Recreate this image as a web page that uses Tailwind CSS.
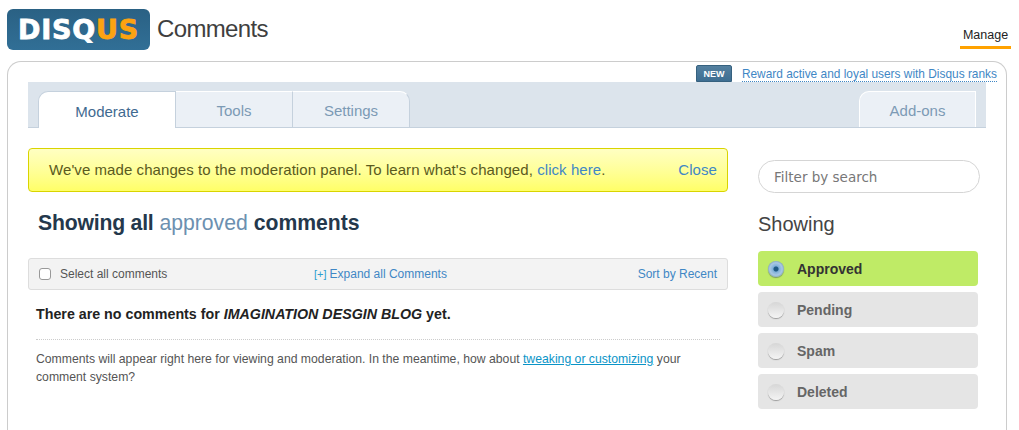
<!DOCTYPE html>
<html lang="en">

<head>
    <meta charset="UTF-8">
    <title>Disqus Comments</title>
    <script src="https://cdn.jsdelivr.net/npm/@tailwindcss/browser@4"></script>
</head>

<body class="bg-white h-[430px] overflow-hidden font-['Liberation_Sans',Arial,sans-serif] text-[#333]">
    <!-- header -->
    <header class="h-[61px] flex items-start pl-[7px] pr-2">
        <div class="mt-[9px] w-[143px] h-[41px] rounded-md bg-gradient-to-b from-[#2a6184] to-[#316f96] flex items-center justify-center font-['DejaVu_Sans',sans-serif] font-bold text-[27px] tracking-[0.8px] leading-none text-white [-webkit-text-stroke:0.8px_currentColor]">
            <span>DISQ<span class="text-[#fca311]">US</span></span>
        </div>
        <h1 class="ml-[7px] mt-[14px] text-[24px] leading-[30px] tracking-[-0.65px] text-[#3f3f3f]">Comments</h1>
        <nav class="ml-auto mt-[27px] w-[51px] h-[22px] border-b-[3px] border-[#ffa200] text-center text-[12.5px] leading-[16px] text-[#222]">Manage</nav>
    </header>

    <!-- panel -->
    <main class="mx-[7px] w-[1000px] h-[369px] border border-b-0 border-[#ccc] rounded-t-[14px] pl-5 pr-5">
        <div class="h-5 flex items-start justify-end -mr-[11px] pt-[3px]">
            <span class="w-9 h-[17px] rounded-t-[2px] bg-gradient-to-b from-[#54809f] to-[#3e6e92] border border-[#36617f] text-white text-[9px] font-bold leading-[16px] text-center">NEW</span>
            <a href="#" class="ml-[10px] mt-[2px] text-[11.9px] leading-[14px] h-[15px] text-[#3f87c5] border-b border-dotted border-[#3f87c5]">Reward active and loyal users with Disqus ranks</a>
        </div>

        <!-- tabs -->
        <div class="w-[958px] h-[46px] bg-[#dce4ec] border-b border-[#c5d1dd] pl-[10px] pr-[10px] pt-[9px] flex items-end text-[15px] leading-[18px] text-center text-[#7c9ab5]">
            <a href="#" class="w-[138px] h-[37px] -mb-px bg-white border-t border-l border-r border-[#c5d1dd] rounded-tl-[10px] font-medium text-[#3f6a90] pt-[11px]">Moderate</a>
            <a href="#" class="w-[117px] h-[36px] bg-[#ebf0f6] border-r border-t border-[#c5d1dd] border-t-white pt-[10px]">Tools</a>
            <a href="#" class="w-[117px] h-[36px] bg-[#ebf0f6] border-r border-t border-[#c5d1dd] border-t-white rounded-tr-[10px] pt-[10px]">Settings</a>
            <a href="#" class="ml-auto w-[117px] h-[36px] bg-[#ebf0f6] border-l border-r border-t border-white rounded-tl-[10px] pt-[10px]">Add-ons</a>
        </div>

        <div class="flex">
            <!-- main column -->
            <section class="w-[700px]">
                <div class="mt-5 h-[44px] rounded-[4px] border border-[#d9d400] bg-gradient-to-b from-[#ffffc2] to-[#ffff66] flex items-center justify-between pl-5 pr-[10px] text-[15px] tracking-[0.075px] text-[#5a5a20]">
                    <p>We've made changes to the moderation panel. To learn what's changed, <a href="#" class="text-[#3f87c5]">click here</a>.</p>
                    <a href="#" class="text-[#3f87c5]">Close</a>
                </div>

                <h2 class="mt-[16px] ml-[10px] h-[30px] text-[21.2px] leading-[29px] font-bold text-[#24384c]"><span class="tracking-[-0.2px]">Showing all</span> <span class="font-normal text-[#6c90b0]">approved</span> comments</h2>

                <div class="mt-[20px] h-[32px] rounded-[3px] border border-[#ddd] bg-[#f3f3f3] flex items-center pl-[10px] pr-[10px] text-[12px]">
                    <label class="w-[275px] flex items-center text-[#555]">
                        <span class="w-3 h-3 rounded-[3px] border border-[#999] bg-white mr-[9px]"></span>
                        Select all comments
                    </label>
                    <a href="#" class="text-[#3f87c5]"><span class="text-[11px] mr-[3px] text-[#2a9fd0]">[+]</span>Expand all Comments</a>
                    <a href="#" class="ml-auto text-[#3f87c5]">Sort by Recent</a>
                </div>

                <div class="ml-2 mr-2">
                    <p class="mt-[15px] pb-[16px] text-[14.25px] leading-[18px] font-bold text-[#222] border-b border-dotted border-[#ccc]">There are no comments for <em>IMAGINATION DESGIN BLOG</em> yet.</p>
                    <p class="mt-[10px] text-[12.23px] leading-[18px] text-[#555]">Comments will appear right here for viewing and moderation. In the meantime, how about <a href="#" class="text-[#0a94c7] underline">tweaking or customizing</a> your comment system?</p>
                </div>
            </section>

            <!-- sidebar -->
            <aside class="ml-[30px] w-[222px]">
                <input type="text" placeholder="Filter by search" class="mt-8 w-[222px] h-[33px] rounded-full border border-[#d5d5d5] pl-[15px] font-['DejaVu_Sans',sans-serif] text-[13.5px] placeholder:text-[#777] outline-none">
                <h3 class="mt-[17px] text-[20px] leading-[28px] text-[#444]">Showing</h3>
                <ul class="mt-[13px] w-[220px] flex flex-col gap-[6px] text-[14px] font-bold text-[#666]">
                    <li class="h-[35px] pt-px rounded-[4px] bg-[#bfeb66] flex items-center pl-[10px] text-[#333]">
                        <span class="w-4 h-4 -mt-px rounded-full bg-[radial-gradient(circle_at_50%_50%,#1f5a85_0,#1f5a85_18%,#7fb0da_27%,#a9c8e4_55%,#86a8c6_71%)] shadow-[0_1px_1px_#7d9a60] mr-[13px]"></span>
                        Approved
                    </li>
                    <li class="h-[35px] pt-px rounded-[4px] bg-[#e5e5e5] flex items-center pl-[10px]">
                        <span class="w-4 h-4 -mt-px rounded-full bg-gradient-to-b from-[#d6d6d6] to-[#f4f4f4] shadow-[0_1px_1px_#999] mr-[13px]"></span>
                        Pending
                    </li>
                    <li class="h-[35px] pt-px rounded-[4px] bg-[#e5e5e5] flex items-center pl-[10px]">
                        <span class="w-4 h-4 -mt-px rounded-full bg-gradient-to-b from-[#d6d6d6] to-[#f4f4f4] shadow-[0_1px_1px_#999] mr-[13px]"></span>
                        Spam
                    </li>
                    <li class="h-[35px] pt-px rounded-[4px] bg-[#e5e5e5] flex items-center pl-[10px]">
                        <span class="w-4 h-4 -mt-px rounded-full bg-gradient-to-b from-[#d6d6d6] to-[#f4f4f4] shadow-[0_1px_1px_#999] mr-[13px]"></span>
                        Deleted
                    </li>
                </ul>
            </aside>
        </div>
    </main>
</body>

</html>
